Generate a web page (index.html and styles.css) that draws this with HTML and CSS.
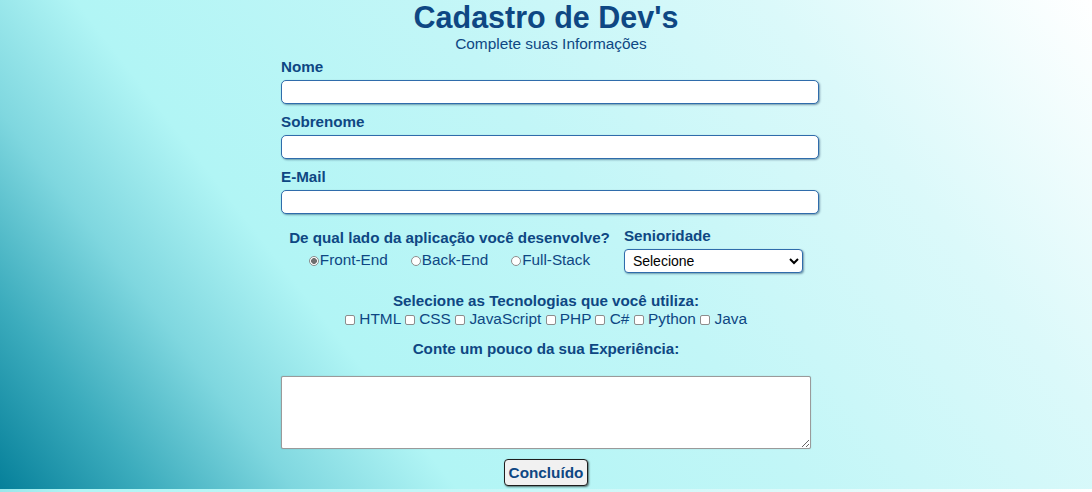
FILE: index.html
```html
<!DOCTYPE html>
<html lang="pt-BR">
<head>
<meta charset="utf-8">
<title>Cadastro de Dev's</title>
<link rel="stylesheet" href="styles.css">
</head>
<body>
<main class="form">
  <h1 class="title">Cadastro de Dev's</h1>
  <p class="subtitle">Complete suas Informações</p>

  <div class="field">
    <label class="label" for="nome">Nome</label>
    <input class="text-input" id="nome" type="text">
  </div>
  <div class="field">
    <label class="label" for="sobrenome">Sobrenome</label>
    <input class="text-input" id="sobrenome" type="text">
  </div>
  <div class="field">
    <label class="label" for="email">E-Mail</label>
    <input class="text-input" id="email" type="email">
  </div>

  <div class="choices">
    <div class="side">
      <p class="label">De qual lado da aplicação você desenvolve?</p>
      <div class="radios">
        <label class="radio"><input class="radio-box" type="radio" name="lado" checked>Front-End</label>
        <label class="radio"><input class="radio-box" type="radio" name="lado">Back-End</label>
        <label class="radio"><input class="radio-box" type="radio" name="lado">Full-Stack</label>
      </div>
    </div>
    <div class="level">
      <label class="label" for="nivel">Senioridade</label>
      <select class="select" id="nivel">
        <option>Selecione</option>
        <option>Júnior</option>
        <option>Pleno</option>
        <option>Sênior</option>
      </select>
    </div>
  </div>

  <div class="techs">
    <p class="label">Selecione as Tecnologias que você utiliza:</p>
    <div class="checks"><input class="check" type="checkbox"> HTML <input class="check" type="checkbox"> CSS <input class="check" type="checkbox"> JavaScript <input class="check" type="checkbox"> PHP <input class="check" type="checkbox"> C# <input class="check" type="checkbox"> Python <input class="check" type="checkbox"> Java</div>
  </div>

  <p class="label center exp">Conte um pouco da sua Experiência:</p>
  <textarea class="textarea"></textarea>

  <div class="actions">
    <button class="btn" type="submit">Concluído</button>
  </div>
</main>
</body>
</html>
```
FILE: styles.css
```css
html {
  background: linear-gradient(52deg, #06809a 0%, #3cacbd 10%, #7fd7df 20%, #b1f5f5 31%, #c2f6f7 55%, #dbf9fa 78%, #ffffff 100%);
}

body {
  margin: 0;
  font-family: "Liberation Sans", Arial, sans-serif;
  color: #0e4783;
}

.form {
  width: 530px;
  margin: 0 auto;
  padding-bottom: 3px;
}

.title {
  margin: 0;
  font-size: 30.5px;
  line-height: 34px;
  font-weight: bold;
  text-align: center;
}

.subtitle {
  margin: 1px 0 0;
  padding-left: 10px;
  font-size: 15.4px;
  line-height: 17px;
  text-align: center;
}

.field {
  display: flex;
  flex-direction: column;
  gap: 4px;
  margin-bottom: 9px;
}

.field:first-of-type {
  margin-top: 6px;
}

.label {
  display: block;
  margin: 0;
  font-size: 15.2px;
  line-height: 18px;
  font-weight: bold;
}

.text-input {
  width: 100%;
  height: 22px;
  margin: 0;
  padding: 0 3px;
  border: 1px solid #2f6cab;
  border-radius: 5px;
  background: #fff;
  box-shadow: 1px 1px 2px rgba(0, 40, 80, 0.45);
  font: 15px "Liberation Sans", Arial, sans-serif;
}

.choices {
  display: flex;
  justify-content: center;
  align-items: flex-start;
  gap: 14px;
  margin-top: 13px;
}

.side {
  padding-top: 2px;
  text-align: center;
}

.radios {
  display: flex;
  justify-content: center;
  gap: 23px;
  margin-top: 4px;
  font-size: 15.3px;
  line-height: 18px;
}

.radio {
  display: flex;
  align-items: center;
}

.radio-box {
  appearance: none;
  width: 10px;
  height: 10px;
  margin: 1px 1px 0 0;
  border: 1px solid #8d8d8d;
  border-radius: 50%;
  background: #fff;
}

.radio-box:checked {
  background: radial-gradient(circle, #6f6f6f 0 2.6px, #fff 3.2px);
}

.level {
  display: flex;
  flex-direction: column;
  gap: 4px;
}

.select {
  width: 179px;
  height: 24px;
  margin: 0;
  padding: 0 2px 0 4px;
  border: 1px solid #2f6cab;
  border-radius: 4px;
  background-color: #fff;
  box-shadow: 1px 1px 2px rgba(0, 40, 80, 0.45);
  font: 14px "Liberation Sans", Arial, sans-serif;
  color: #000;
}

.techs {
  margin-top: 19px;
  text-align: center;
}

.checks {
  font-size: 15.4px;
  line-height: 18px;
}

.check {
  appearance: none;
  width: 10px;
  height: 10px;
  margin: 0;
  border: 1px solid #8d8d8d;
  border-radius: 2px;
  background: #fff;
  vertical-align: -1px;
}

.center {
  text-align: center;
}

.exp {
  margin-top: 12px;
}

.textarea {
  display: block;
  box-sizing: border-box;
  width: 530px;
  height: 73px;
  margin: 18px 0 0;
  border: 1px solid #9a9a9a;
  border-radius: 2px;
  background: #fff;
  box-shadow: 0 0 1px rgba(0, 0, 0, 0.3);
}

.actions {
  display: flex;
  justify-content: center;
  margin-top: 10px;
}

.btn {
  height: 27px;
  padding: 0 4px;
  border: 1px solid #1e1e1e;
  border-radius: 4px;
  background: #f1f1f1;
  box-shadow: 1px 1px 2px rgba(0, 0, 0, 0.55);
  font: bold 15.3px "Liberation Sans", Arial, sans-serif;
  color: #0e4783;
}
```
